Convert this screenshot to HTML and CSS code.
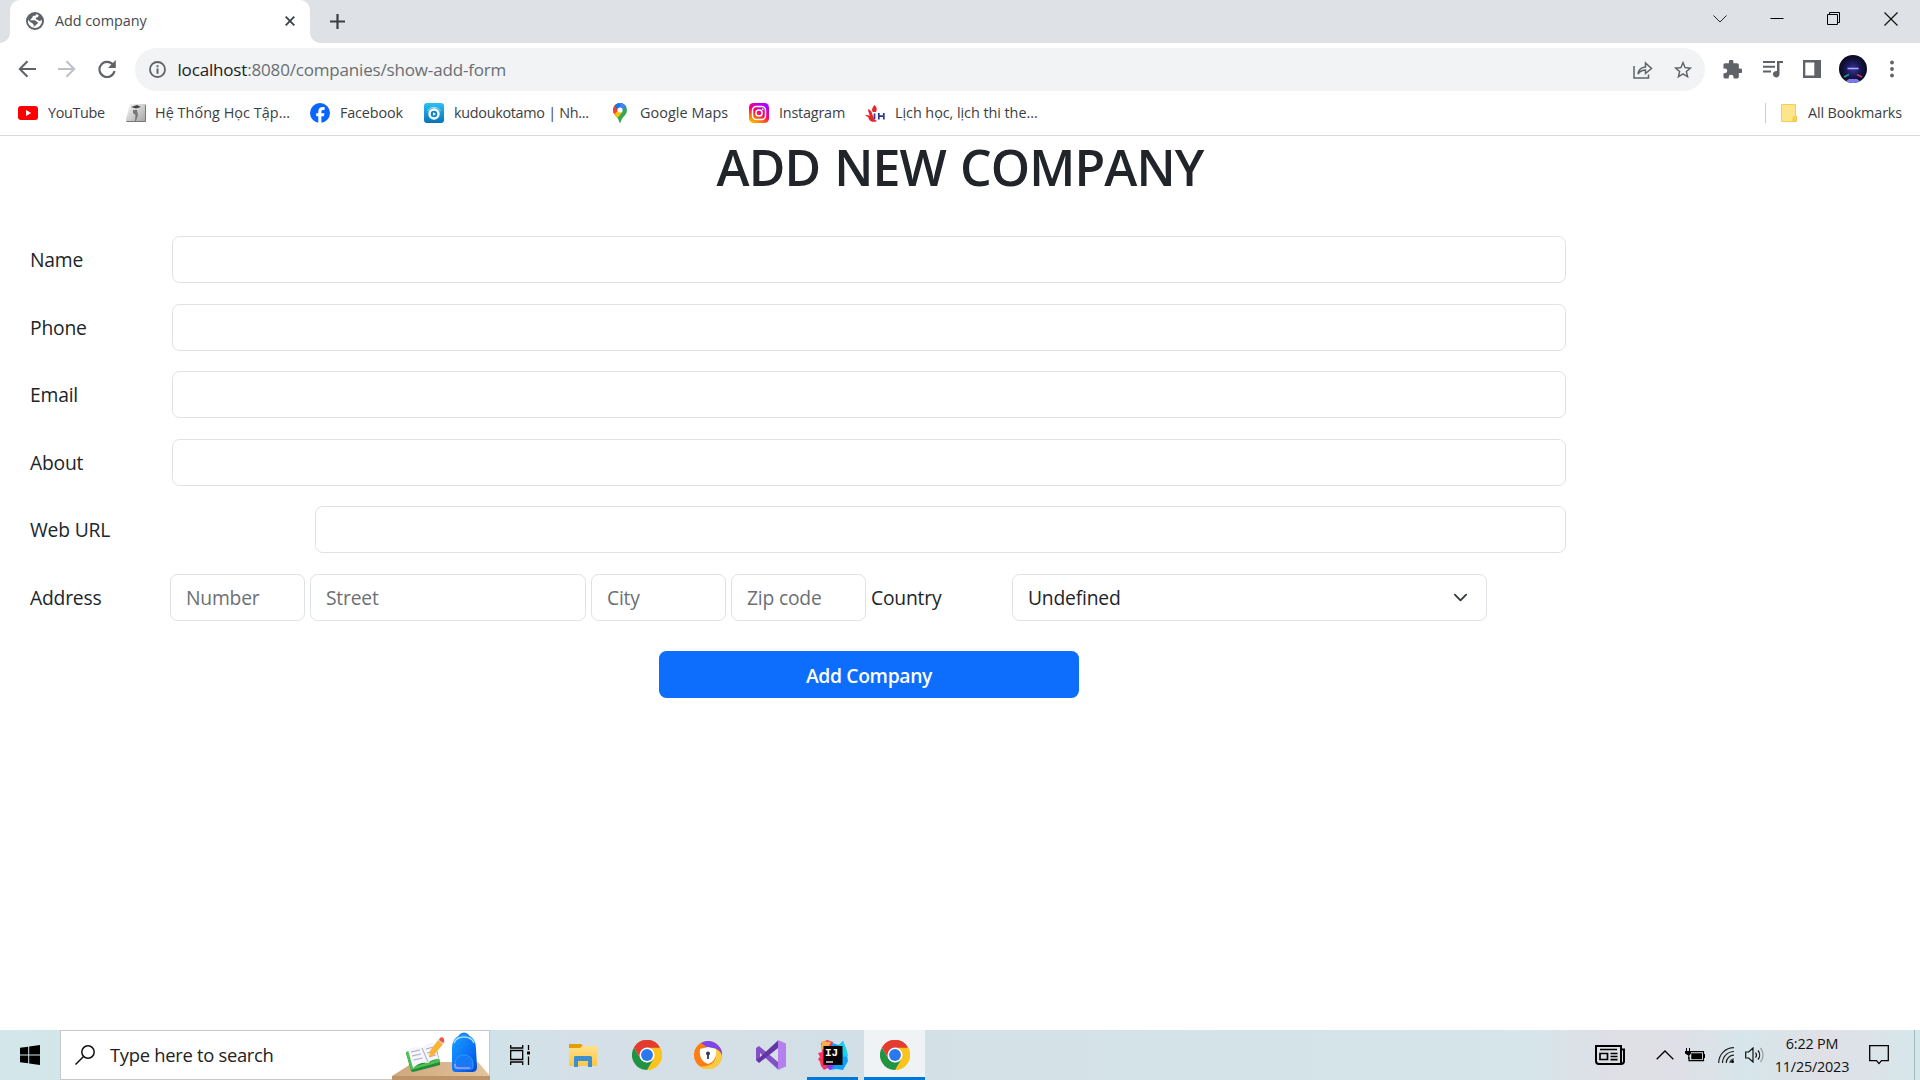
FILE: index.html
```html
<!DOCTYPE html>
<html lang="en">
<head>
<meta charset="utf-8">
<title>Add company</title>
<link rel="stylesheet" href="styles.css">
</head>
<body>
<svg width="0" height="0" class="defs">
  <defs>
    <symbol id="chrome" viewBox="0 0 48 48">
      <path fill="#e33b2e" d="M24 24 3.2 12A24 24 0 0 1 44.8 12z"/>
      <path fill="#fcc31e" d="M24 24 44.8 12A24 24 0 0 1 24 48z"/>
      <path fill="#fcc31e" d="M24 12h20.8A24 24 0 0 1 24 48l10.4-18z"/>
      <path fill="#229342" d="M3.2 12A24 24 0 0 0 24 48l10.4-18L24 36 13.6 30z"/>
      <path fill="#e33b2e" d="M3.2 12A24 24 0 0 1 44.8 12H24L13.600 30z"/>
      <circle cx="24" cy="24" r="12" fill="#fff"/>
      <circle cx="24" cy="24" r="9.500" fill="#2b78ee"/>
    </symbol>
    <linearGradient id="insta" x1="0" y1="1" x2=".55" y2="0"><stop offset="0" stop-color="#ffd600"/><stop offset=".3" stop-color="#ff7a00"/><stop offset=".6" stop-color="#ff0169"/><stop offset="1" stop-color="#a900ff"/></linearGradient>
    <linearGradient id="kudou" x1="0" y1="0" x2="0" y2="1"><stop offset="0" stop-color="#2cc1f2"/><stop offset="1" stop-color="#0872b8"/></linearGradient>
    <linearGradient id="grey" x1="0" y1="0" x2="1" y2="1"><stop offset="0" stop-color="#fafafa"/><stop offset="1" stop-color="#a2a2a2"/></linearGradient>
    <radialGradient id="night" cx=".5" cy=".5" r=".5"><stop offset="0" stop-color="#3a35a0"/><stop offset=".55" stop-color="#191650"/><stop offset="1" stop-color="#0b0a1c"/></radialGradient>
    <linearGradient id="bag" x1="0" y1="0" x2="1" y2="1"><stop offset="0" stop-color="#1aa0ff"/><stop offset=".6" stop-color="#0a70f5"/><stop offset="1" stop-color="#0847c4"/></linearGradient>
    <linearGradient id="desk" x1="0" y1="0" x2="1" y2="0"><stop offset="0" stop-color="#cfa77c"/><stop offset="1" stop-color="#e3c39d"/></linearGradient>
    <linearGradient id="folder" x1="0" y1="0" x2="0" y2="1"><stop offset="0" stop-color="#ffe08a"/><stop offset="1" stop-color="#fcc745"/></linearGradient>
  </defs>
</svg>

<header class="browser">
  <div class="tabstrip">
    <div class="tab">
      <svg class="favicon" viewBox="0 0 20 20" width="18" height="18"><circle cx="10" cy="10" r="10" fill="#5f6368"/><path fill="#fff" d="M11.500 2.200c-.2 1.600-1.300 2-3 2.100C7.200 4.400 7.500 6 6.500 7 5.500 8 4.700 8 4.800 9.200h4.500c1.500 0 1.600 1.400 2.900 1.500 1.300.1 1.300 2.100 0 2.700-1.100.5-1 1.600-2 1.600-1 .1-1.200.9-1.200 2.700A8 8 0 0 1 2.200 8.500L5 11.300c1 .9 2 .4 2.300 1.600.3.900 1.300.8 1.300 2.100v2.800A8 8 0 0 0 17.800 9c-1.400 0-1.300 1-2.700 1-1.500 0-1.900-1.500-3.300-1.700-1.400-.2-1.300-2 0-2.200 1.500-.2 2.300-.8 2.200-2.700z"/></svg>
      <span class="tab-title">Add company</span>
      <svg class="tab-close" viewBox="0 0 10 10" width="10" height="10" stroke="#3c4043" stroke-width="1.800"><path d="M.7.7l8.600 8.600M9.300.7.7 9.300"/></svg>
    </div>
    <svg class="new-tab" viewBox="0 0 15 15" width="15" height="15" stroke="#3c4043" stroke-width="2.200"><path d="M7.500 0v15M0 7.500h15"/></svg>
    <div class="window-buttons">
      <svg viewBox="0 0 14 14" width="14" height="14" fill="none" stroke="#222"><path d="M.5 3.500 7 10 13.500 3.500"/></svg>
      <svg viewBox="0 0 14 14" width="14" height="14" fill="none" stroke="#000"><path d="M.5 6.500h13"/></svg>
      <svg viewBox="0 0 14 14" width="14" height="14" fill="none" stroke="#000"><path d="M.5 2.500h10v10h-10zM2.500 2.500v-2h10v10h-2"/></svg>
      <svg viewBox="0 0 14 14" width="14" height="14" fill="none" stroke="#111" stroke-width="1.200"><path d="M.5.5l13 13M13.500.5l-13 13"/></svg>
    </div>
  </div>

  <div class="toolbar">
    <nav class="nav-buttons">
      <svg viewBox="0 0 18 18" width="18" height="18" fill="none" stroke="#5f6368" stroke-width="2"><path d="M18 9H2M9.500 1.300 1.800 9l7.700 7.700"/></svg>
      <svg viewBox="0 0 18 18" width="18" height="18" fill="none" stroke="#bdc1c6" stroke-width="2"><path d="M0 9h16M8.500 1.300 16.200 9l-7.700 7.700"/></svg>
      <svg viewBox="0 0 18 18" width="18" height="18"><path d="M15.200 5A7.600 7.600 0 1 0 16.500 11" fill="none" stroke="#5f6368" stroke-width="2.100"/><path fill="#5f6368" d="M17.800 0v8H10z"/></svg>
    </nav>
    <div class="omnibox">
      <svg viewBox="0 0 17 17" width="17" height="17"><circle cx="8.500" cy="8.500" r="7.500" fill="none" stroke="#5f6368" stroke-width="1.800"/><path fill="#5f6368" d="M7.500 4.200h2v2h-2zM7.500 7.500h2v5.300h-2z"/></svg>
      <span class="url"><b>localhost</b>:8080/companies/show-add-form</span>
      <svg class="share" viewBox="0 0 20 18" width="20" height="18" fill="none" stroke="#5f6368" stroke-width="1.500"><path d="M1 5v12h14.500v-3.500M5 13c.5-4 3-6.600 7.500-7V2l6 5.500-6 5V9C9.200 9 7 10.200 5 13z"/></svg>
      <svg viewBox="0 0 24 24" width="22" height="22"><path fill="#5f6368" d="M22 9.240l-7.190-.620L12 2 9.190 8.630 2 9.240l5.460 4.730L5.820 21 12 17.270 18.180 21l-1.630-7.030L22 9.240zM12 15.400l-3.760 2.270 1-4.280-3.320-2.880 4.380-.38L12 6.100l1.710 4.040 4.380.38-3.320 2.880 1 4.280L12 15.400z"/></svg>
    </div>
    <div class="actions">
      <svg viewBox="1.500 1.500 21 21" width="19" height="19"><path fill="#5f6368" d="M20.500 11H19V7c0-1.100-.9-2-2-2h-4V3.500a2.500 2.500 0 0 0-5 0V5H4c-1.100 0-2 .9-2 2v3.800h1.500a2.700 2.700 0 0 1 0 5.400H2V20c0 1.100.9 2 2 2h3.800v-1.500a2.700 2.700 0 0 1 5.400 0V22H17c1.100 0 2-.9 2-2v-4h1.500a2.500 2.500 0 0 0 0-5z"/></svg>
      <svg viewBox="0 0 20 18" width="20" height="18" fill="#5f6368"><path d="M0 1h12v2H0zM0 5.700h12v2H0zM0 10.400h8v2H0zM14 1h6v2h-3.500v11a3.300 3.300 0 1 1-2.500-3z"/></svg>
      <svg viewBox="0 0 18 18" width="18" height="18"><path fill="#5f6368" fill-rule="evenodd" d="M0 0h18v18H0zM2.300 2.500v13h9v-13z"/></svg>
      <svg class="avatar" viewBox="0 0 28 28" width="28" height="28"><circle cx="14" cy="14" r="14" fill="url(#night)"/><path d="M8.500 13.500h11" stroke="#aab0ff" stroke-width="1.500"/><path d="M5 22l5-2.500" stroke="#19a884" stroke-width="1.500"/><path d="M18 19.500l5 2.500" stroke="#c93a6c" stroke-width="1.500"/><path d="M7 26a14 14 0 0 0 14 0l-3-2h-8z" fill="#7d7af0"/></svg>
      <svg viewBox="0 0 4 18" width="4" height="18" fill="#5f6368"><circle cx="2" cy="2.500" r="1.900"/><circle cx="2" cy="9" r="1.900"/><circle cx="2" cy="15.500" r="1.900"/></svg>
    </div>
  </div>

  <div class="bookmarks">
    <a class="bm bm-youtube"><svg viewBox="0 0 20 20"><rect y="3" width="20" height="14" rx="3" fill="#f00"/><path fill="#fff" d="M8 7l5.200 3L8 13z"/></svg>YouTube</a>
    <a class="bm bm-school"><svg viewBox="0 0 20 20"><path fill="url(#grey)" d="M0 16 4 1h16v18H0z"/><path fill="#444" d="M5 4l6-2 4 2-5 1.500z"/><path fill="#777" d="M7 7h4l1 5-2 6H9l.5-6L7 10z"/><path d="M.5 18.500h19V2" fill="none" stroke="#777"/></svg>Hệ Thống Học Tập...</a>
    <a class="bm bm-facebook"><svg viewBox="0 0 20 20"><circle cx="10" cy="10" r="10" fill="#0866ff"/><path fill="#fff" d="M8.300 20v-6.700H6.200v-3h2.100V8.900c0-3.400 1.500-4.900 4.800-4.900l1.500.1v2.800h-1.200c-1.500 0-2 .6-2 2v1.400h3l-.5 3h-2.500V20z"/></svg>Facebook</a>
    <a class="bm bm-kudou"><svg viewBox="0 0 20 20"><rect width="20" height="20" rx="3" fill="url(#kudou)"/><circle cx="10" cy="11" r="5.700" fill="#fff"/><circle cx="10" cy="11" r="3.300" fill="#0f86c8"/><path d="M9 9.200v3.600l3-1.800z" fill="#fff"/><path d="M3.500 8a7.500 7.500 0 0 1 13 0" fill="none" stroke="#a9e4fa"/></svg>kudoukotamo | Nh...</a>
    <a class="bm bm-maps"><svg viewBox="0 0 20 20"><clipPath id="pin"><path d="M10 20c-.8 0-1-3-2.600-4.900C5.500 12.700 3 10.500 3 7a7 7 0 0 1 14 0c0 3.500-2.500 5.700-4.400 8.100C11 17 10.800 20 10 20z"/></clipPath><g clip-path="url(#pin)"><path fill="#34a853" d="M0 0h20v20H0z"/><path fill="#fbbc04" d="M1 12 9 4l3.500 5L5 18z"/><path fill="#ea4335" d="M0 0h5l5 6-8 7z"/><path fill="#1a73e8" d="M4.500 2.300 10-2l7 5.500L9 9.500z"/><path fill="#4285f4" d="M10 0h4l2.500 3-6.500 7z"/></g><circle cx="10" cy="7" r="2.600" fill="#fff"/></svg>Google Maps</a>
    <a class="bm bm-insta"><svg viewBox="0 0 20 20"><rect width="20" height="20" rx="4.500" fill="url(#insta)"/><g fill="none" stroke="#fff" stroke-width="1.500"><rect x="3.500" y="3.500" width="13" height="13" rx="3.800"/><circle cx="10" cy="10" r="3.100"/></g><circle cx="13.700" cy="6.300" r=".9" fill="#fff"/></svg>Instagram</a>
    <a class="bm bm-iuh"><svg viewBox="0 0 20 20"><path fill="#e8262d" d="M9.500 2c3 3 2.500 5 1.500 7H8C6 7 7.500 4.500 9.500 2zM3 6c3 1 4 3 4.500 6L9 16l3 2c-3 1.500-6.500 1-8-1.500C4 14 1.500 13 0 12.500c2-.8 3.500-.4 4.500.5C4.500 10.500 3 9 3 6z"/><path fill="none" stroke="#2f3d90" stroke-width="1.800" d="M9.500 10.500V16M13.800 10v6.500M18.800 10v6.500M13.800 13.200h5"/></svg>Lịch học, lịch thi the...</a>
    <span class="bm-divider"></span>
    <a class="bm-all"><svg viewBox="0 0 16 18" width="16" height="18"><path fill="#fee48b" stroke="#f6cf57" d="M.5.500h14v11.500h1v5.500H.5z"/><path fill="#f9d35f" stroke="#f0bf36" stroke-width=".8" d="M12 17.500v-3.500c0-1.500 3.500-2 3.500-1v3c0 1-1 1.500-3.500 1.500z"/></svg>All Bookmarks</a>
  </div>
</header>

<main class="page">
  <h1>ADD NEW COMPANY</h1>
  <form class="form">
    <div class="row"><label>Name</label><input class="control"></div>
    <div class="row"><label>Phone</label><input class="control"></div>
    <div class="row"><label>Email</label><input class="control"></div>
    <div class="row"><label>About</label><input class="control"></div>
    <div class="row row-wide"><label>Web URL</label><input class="control"></div>
    <div class="row row-address">
      <label>Address</label>
      <input class="control" placeholder="Number">
      <input class="control" placeholder="Street">
      <input class="control" placeholder="City">
      <input class="control" placeholder="Zip code">
      <label>Country</label>
      <div class="control select">Undefined<svg viewBox="0 0 16 16" width="15" height="15" fill="none" stroke="#343a40" stroke-width="2" stroke-linecap="round" stroke-linejoin="round"><path d="M2 5l6 6 6-6"/></svg></div>
    </div>
    <button type="button" class="submit">Add Company</button>
  </form>
</main>

<footer class="taskbar">
  <div class="start"><svg viewBox="0 0 20 20" width="20" height="20"><path d="M0 2.800 8.200 1.700V9.500H0zM9.200 1.500 20 0v9.500H9.200zM0 10.500h8.200v7.800L0 17.200zM9.200 10.500H20V20L9.200 18.500z"/></svg></div>
  <div class="search">
    <svg viewBox="0 0 20 20" width="20" height="20" fill="none" stroke="#111" stroke-width="1.500"><circle cx="13" cy="7" r="6.200"/><path d="M8.500 11.500.5 19.500"/></svg>
    <span>Type here to search</span>
    <svg class="art" viewBox="0 0 98 50" width="98" height="50">
      <path fill="url(#desk)" d="M0 46 22 32h64l12 14z"/><path fill="#bd9467" d="M0 46h98v4H0z"/>
      <path fill="#1f8b3b" d="M14 23l4-3 26-3 4 15v3L21 42l-2-1z"/><path fill="#4fc04e" d="M14 22l5 18 29-8-1-3-26 8-4-16z"/>
      <path fill="#f6f5fb" d="M16 20c5-4 10-4 14-2 3-4 8-6 12-5l5 16c-4 0-8 1-11 4-5-1-10 0-15 5z"/>
      <path d="M30 18l6 14M19 22l9-2M20 26l9-2M21.500 30l9-2M34 19l8-2M35 23l8-2M37 27l7-2" stroke="#a9a8be" stroke-width="1" fill="none"/>
      <path fill="#f9b233" d="M38 21 46 10l5 4-9 11-5 2z"/><path fill="#dcdce6" d="M46 10l2-2 5 4-2 2z"/><path fill="#f0564a" d="M48 8c2-2 5 0 4 4l-1 1-4-3z"/>
      <path d="M67 9c0-7 10-7 10 0" fill="none" stroke="#1c84f0" stroke-width="2.500"/>
      <path fill="url(#bag)" d="M60 19C60 9 65 5 72 5s12 4 12 14l1 18c0 4-2 5-5 5H65c-4 0-5-1-5-5z"/>
      <path d="M62 13c3-8 17-8 20 0" fill="none" stroke="#a9dcff" stroke-width="1.500"/>
      <path fill="#167af5" stroke="#2e9bff" d="M63 34c0-12 18-12 18 0v3c0 2-1 2-3 2H66c-2 0-3 0-3-2z"/><path d="M63 34c0 4 1 4 4 4h11" stroke="#bd91ff" stroke-width="1.700" fill="none"/>
    </svg>
  </div>
  <div class="apps">
    <div class="app app-view"><svg viewBox="0 0 20 20" width="20" height="20" fill="none" stroke="#000" stroke-width="1.300"><path d="M.7 0v3h12V0M.7 20v-3h12v3M.7 5.500h12v9H.7zM18.500 0v5M18.500 11.500V20"/><path d="M17 6.500h3v3h-3z" fill="#000" stroke="none"/></svg></div>
    <div class="app app-files"><svg viewBox="0 0 28 24" width="28" height="24"><path fill="#dfa000" d="M0 1h12l2 2-2 3H0z"/><path fill="url(#folder)" d="M0 5h11l2-2h15v20H0z"/><path fill="#3b8fd0" d="M5 24V15c0-2 1-2 2-2h14c2 0 2 1 2 2v9h-4v-6H9v6z"/></svg></div>
    <div class="app"><svg width="30" height="30"><use href="#chrome"/></svg></div>
    <div class="app"><svg viewBox="0 0 28 28" width="28" height="28"><circle cx="14" cy="14" r="14" fill="#ff7d12"/><path fill="#7b45f0" d="M7 2a14 14 0 0 1 21 13c-1-7-9-9-14-8z"/><path fill="#f9cb3e" d="M28 15A14 14 0 0 1 5 25c8 2 17-2 17-11 0-2-1-5-4-7 6 1 9 4 10 8z"/><path fill="#fff" d="M6 8l8-2 8 2c1 8-2 13-8 15C8 21 5 16 6 8z"/><circle cx="14" cy="12.500" r="2" fill="#303a57"/><path d="M14 13v5" stroke="#303a57" stroke-width="1.800"/></svg></div>
    <div class="app"><svg viewBox="0 0 30 30" width="30" height="30"><path fill="#8450c8" d="M0 8l3-2 19 16v7.500L4 13v6l-1 3-3-2z"/><path fill="#6335a5" d="M0 20l3 3L22 8V.5L3 18z"/><path fill="#b480f0" d="M22 0l8 3.500v23L22 30z"/></svg></div>
    <div class="app app-open"><svg viewBox="0 0 30 30" width="30" height="30"><path fill="#fe315d" d="M0 13l4-1-1-9 6-3 6 2-2 13v11l-7 4-3-4-1-4-2-3 2-2z"/><path fill="#fcb04a" d="M4 1l9 1-3 6-7 2z"/><path fill="#0aa0f5" d="M14 3l7 2 4-4 3 8 2 12-5 9-7-1-6 1-2-5 5-5z"/><path fill="#18d0f0" d="M21 5l4-4 4 10 1 5-4 1z"/><path fill="#9a2ff0" d="M11 24l5 2-4 4-4-3z"/><path fill="#0c0309" d="M5.500 6h19v19h-19z"/><path d="M8 22h7" stroke="#fff" stroke-width="1.300"/><text x="7" y="15.500" class="ij">IJ</text></svg></div>
    <div class="app app-active"><svg width="30" height="30"><use href="#chrome"/></svg></div>
  </div>
  <div class="tray">
    <svg viewBox="0 0 30 20" width="30" height="20" fill="none" stroke="#000" stroke-width="2"><path d="M1 1h25v18H4c-2 0-3-1-3-3zM26 4.500h3V16c0 2-1 3-3 3"/><path d="M5 8.500h7.500v6H5zM5 4.500h17M15.500 8.500h7M15.500 11.500h7M15.500 14.700h7" stroke-width="1.700"/></svg>
    <svg viewBox="0 0 18 10" width="18" height="10" fill="none" stroke="#000" stroke-width="1.300"><path d="M.7 9.300 9 1l8.300 8.300"/></svg>
    <svg viewBox="0 0 20 14" width="20" height="14"><path d="M5 3.700h13.500v9H4V9" fill="none" stroke="#000" stroke-width="1.200"/><path d="M6.300 5.200h10.700v6H6.300zM18.500 6H20v4h-1.500zM0 3h6v2.500L4.300 7.500V11h-1V7.500L0 5.500z"/><path d="M1.500 0v4M4.500 0v4" stroke="#000"/></svg>
    <svg viewBox="0 0 16 16" width="16" height="16" fill="none" stroke="#222" stroke-width="1.200"><path d="M.7 16A15.300 15.300 0 0 1 16 .7M4.500 16A11.500 11.500 0 0 1 16 4.500M8.200 16A7.800 7.800 0 0 1 16 8.200"/><path d="M12 16a4 4 0 0 1 4-4"/><circle cx="14.500" cy="14.500" r="1.500" fill="#000" stroke="none"/></svg>
    <svg viewBox="0 0 20 16" width="20" height="16" fill="none" stroke="#111" stroke-width="1.200"><path d="M.7 5h3L8 1v14l-4.300-4h-3zM10.500 5.500a4 4 0 0 1 0 5M13 3.500a7 7 0 0 1 0 9"/><path d="M15.500 1a11 11 0 0 1 0 14" stroke="#999"/></svg>
    <div class="clock"><span>6:22 PM</span><span>11/25/2023</span></div>
    <svg class="notify" viewBox="0 0 20 20" width="20" height="20" fill="none" stroke="#000" stroke-width="1.300"><path d="M.7.700h18.600v15H12.500L10 18.600l-2.500-2.900H.7z"/></svg>
    <span class="peek"></span>
  </div>
</footer>
</body>
</html>
```
FILE: styles.css
```css
* { box-sizing: border-box; }

body {
  margin: 0;
  width: 1920px;
  height: 1080px;
  overflow: hidden;
  display: flex;
  flex-direction: column;
  background: #fff;
  font-family: "Open Sans", "Noto Sans", sans-serif;
  color: #212529;
}

svg { display: block; flex: none; }
.defs { position: absolute; }

/* Browser chrome */
.browser { height: 136px; border-bottom: 1px solid #d9dbde; }

.tabstrip {
  height: 43px;
  display: flex;
  background: #dee1e6;
  padding-left: 10px;
}
.tab {
  position: relative;
  width: 300px;
  height: 43px;
  padding: 0 15px 2px 16px;
  display: flex;
  align-items: center;
  background: #fff;
  border-radius: 10px 10px 0 0;
}
.tab::before, .tab::after {
  content: "";
  position: absolute;
  bottom: 0;
  width: 10px;
  height: 10px;
}
.tab::before { left: -10px; background: radial-gradient(circle at 0 0, #dee1e6 9.5px, #fff 10px); }
.tab::after { right: -10px; background: radial-gradient(circle at 100% 0, #dee1e6 9.5px, #fff 10px); }
.tab-title {
  margin-left: 11px;
  font-size: 14.4px;
  letter-spacing: -0.05px;
  color: #45494d;
}
.tab-close { margin-left: auto; }
.new-tab { margin: 14px 0 0 20px; }
.window-buttons {
  display: flex;
  gap: 43px;
  margin: 12px 22px 0 auto;
}

.toolbar {
  height: 53px;
  display: flex;
  align-items: center;
  padding: 0 26px 0 18px;
}
.nav-buttons {
  flex: none;
  display: flex;
  gap: 22px;
  width: 117px;
  padding-bottom: 1px;
}
.omnibox {
  flex: none;
  width: 1570px;
  height: 43px;
  display: flex;
  align-items: center;
  padding: 0 11px 0 14px;
  border-radius: 22px;
  background: #f1f3f4;
}
.url {
  margin: 0 auto 0 11.5px;
  font-size: 17px;
  letter-spacing: -0.17px;
  color: #6a6e73;
}
.url b { font-weight: 400; color: #202124; }
.share { margin-right: 19px; }
.actions {
  flex: 1;
  display: flex;
  align-items: center;
  gap: 20.5px;
  padding: 0 0 1px 18px;
}
.actions .avatar { margin: 0 2.5px 0 -2.5px; }

.bookmarks {
  height: 33px;
  display: flex;
  align-items: center;
  padding: 0 18px;
  font-size: 14.4px;
  letter-spacing: -0.1px;
  color: #3c4043;
  white-space: nowrap;
}
.bm { display: flex; align-items: center; gap: 10px; }
.bm svg { width: 20px; height: 20px; }
.bm-youtube { width: 108px; letter-spacing: -0.35px; }
.bm-school { width: 184px; gap: 9px; letter-spacing: 0.05px; }
.bm-facebook { width: 114px; letter-spacing: -0.15px; }
.bm-kudou { width: 186px; letter-spacing: -0.3px; }
.bm-maps { width: 139px; letter-spacing: 0.05px; }
.bm-insta { width: 116px; letter-spacing: -0.2px; }
.bm-iuh { width: 180px; letter-spacing: -0.05px; }
.bm-divider {
  width: 1px;
  height: 20px;
  margin: 0 15px 0 auto;
  background: #c8cbcf;
}
.bm-all { display: flex; align-items: center; gap: 11px; letter-spacing: -0.15px; }

/* Page */
.page { flex: 1; }
h1 {
  margin: 0;
  padding-top: 1px;
  text-align: center;
  font-size: 50px;
  line-height: 60px;
  font-weight: 600;
  letter-spacing: -0.9px;
  word-spacing: 2px;
}
.form {
  width: 1566px;
  margin-top: 39px;
  padding-left: 30px;
  display: flex;
  flex-direction: column;
  gap: 20px;
  font-size: 19.3px;
  letter-spacing: -0.2px;
}
.row {
  display: grid;
  grid-template-columns: 142px 1fr;
  align-items: start;
  height: 47.5px;
}
.row-wide { grid-template-columns: 285px 1fr; }
.row-address {
  grid-template-columns: 135px 135px 276px 135px 135px 136px 475px;
  column-gap: 5px;
}
.row label { line-height: 47px; padding-top: 0.4px; }
.control {
  width: 100%;
  height: 47px;
  padding: 1px 15px 0;
  border: 1px solid #dee2e6;
  border-radius: 7.5px;
  background: #fff;
  font: inherit;
  letter-spacing: inherit;
  color: #212529;
  outline: 0;
}
.control::placeholder { color: #6c7075; opacity: 1; }
.select {
  display: flex;
  align-items: center;
  justify-content: space-between;
  padding-right: 18px;
}
.submit {
  width: 420px;
  height: 47px;
  margin: 10px 0 0 629px;
  padding: 2px 0 0;
  border: 0;
  border-radius: 7.5px;
  background: #0d6efd;
  color: #fff;
  font: 600 19.3px "Open Sans", sans-serif;
  letter-spacing: -0.35px;
}

/* Taskbar */
.taskbar {
  height: 50px;
  display: flex;
  background: linear-gradient(90deg, #d3e7ea 0, #d0e2e7 26%, #d5dfe7 30%, #d3dfe6 45%, #d4e3e8 60%, #d6e5ea 80%, #dfdfe6 84%, #e0dfe6 87%, #d6e6eb 91%, #e0e0e6 95%, #d5e7eb 100%);
}
.start { width: 60px; padding: 15px 0 0 20px; }
.search {
  width: 430px;
  height: 50px;
  display: flex;
  align-items: center;
  padding-left: 14px;
  border: 1px solid #c8c8cb;
  background: #fff;
  font-size: 18.4px;
  letter-spacing: -0.3px;
  color: #222;
}
.search span { margin: -2px 0 0 15px; }
.art { margin: 0 -1px 0 auto; }
.apps { display: flex; padding-left: 1px; }
.app {
  width: 62px;
  height: 50px;
  display: flex;
  align-items: center;
  justify-content: center;
}
.app-view { width: 58px; }
.app-files { width: 68px; }
.app-files + .app { width: 59px; }
.app-files + .app + .app { width: 64px; }
.app-open, .app-active { border-bottom: 3px solid #0078d7; padding-top: 3px; }
.app-open { width: 51px; margin: 0 6px 0 5px; }
.app-active { width: 61px; background: #eff3f6; }
.ij { font: 700 11px "Liberation Mono", monospace; fill: #fff; }
.tray {
  display: flex;
  align-items: center;
  margin-left: auto;
}
.tray svg:nth-of-type(2) { margin-left: 31px; }
.tray svg:nth-of-type(3) { margin-left: 11px; }
.tray svg:nth-of-type(4) { margin-left: 13px; }
.tray svg:nth-of-type(5) { margin-left: 11px; }
.clock {
  width: 94px;
  display: flex;
  flex-direction: column;
  align-items: center;
  font-size: 14.4px;
  line-height: 23px;
  letter-spacing: -0.2px;
  color: #111;
}
.tray .notify { margin-left: 10px; }
.peek {
  width: 6px;
  height: 50px;
  margin-left: 25px;
  border-left: 1px solid #a5b9bd;
}
```
